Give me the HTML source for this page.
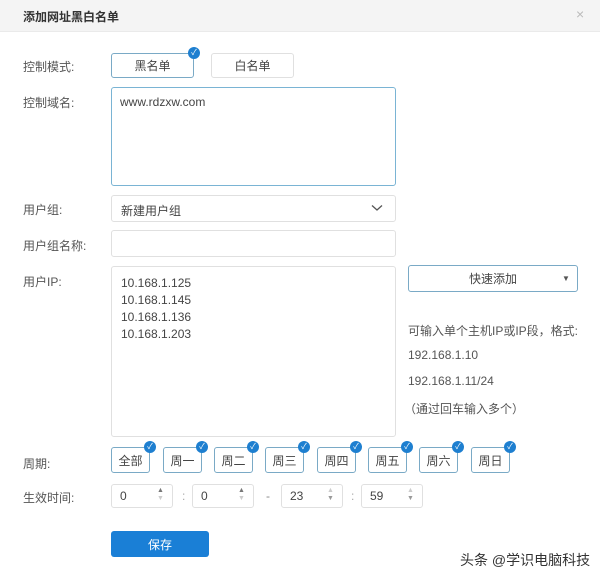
<html><head><style>
body{margin:0;width:600px;height:580px;background:#fff;font-family:"Liberation Sans","Noto Sans CJK SC",sans-serif;font-size:12px;color:#444;position:relative;overflow:hidden}
.a{position:absolute}
.hd{left:0;top:0;width:600px;height:31px;background:#f4f4f4;border-bottom:1px solid #eaeaea}
.lb{left:23px;color:#555}
.bx{border:1px solid #e0e0e0;border-radius:3px;background:#fff;box-sizing:border-box}
.bl{border-color:#7aaac6}
.btn{display:flex;align-items:center;justify-content:center}
.ck{width:12px;height:12px;border-radius:50%;background:#1e7fd0;color:#fff;font-size:8px;line-height:12px;text-align:center}
.tx{color:#555}
</style></head><body>
<div class="a hd"></div>
<div class="a" style="left:23px;top:8px;font-weight:bold;font-size:12px;color:#333">添加网址黑白名单</div>
<div class="a" style="left:576px;top:6px;color:#bbb;font-size:14px">×</div>

<div class="a lb" style="top:58px">控制模式:</div>
<div class="a bx bl btn" style="left:111px;top:53px;width:83px;height:25px">黑名单</div>
<div class="a ck" style="left:188px;top:47px">✓</div>
<div class="a bx btn" style="left:211px;top:53px;width:83px;height:25px">白名单</div>

<div class="a lb" style="top:94px">控制域名:</div>
<div class="a bx bl" style="left:111px;top:87px;width:285px;height:99px;border-color:#7ab4d4"></div>
<div class="a" style="left:120px;top:95px">www.rdzxw.com</div>

<div class="a lb" style="top:201px">用户组:</div>
<div class="a bx" style="left:111px;top:195px;width:285px;height:27px"></div>
<div class="a" style="left:121px;top:202px">新建用户组</div>
<svg class="a" style="left:371px;top:204px" width="12" height="8"><path d="M1 1.5L6 6L11 1.5" stroke="#555" stroke-width="1.3" fill="none"/></svg>

<div class="a lb" style="top:237px">用户组名称:</div>
<div class="a bx" style="left:111px;top:230px;width:285px;height:27px"></div>

<div class="a lb" style="top:273px">用户IP:</div>
<div class="a bx" style="left:111px;top:266px;width:285px;height:171px"></div>
<div class="a" style="left:121px;top:275px;line-height:17px">10.168.1.125<br>10.168.1.145<br>10.168.1.136<br>10.168.1.203</div>

<div class="a bx bl btn" style="left:408px;top:265px;width:170px;height:27px">快速添加</div>
<div class="a" style="left:562px;top:274px;font-size:8px;color:#555">▼</div>
<div class="a tx" style="left:408px;top:322px">可输入单个主机IP或IP段，格式:</div>
<div class="a tx" style="left:408px;top:348px">192.168.1.10</div>
<div class="a tx" style="left:408px;top:374px">192.168.1.11/24</div>
<div class="a tx" style="left:404px;top:400px">（通过回车输入多个）</div>

<div class="a lb" style="top:455px">周期:</div>
<div class="a bx bl btn" style="left:111px;top:447px;width:39px;height:26px">全部</div><div class="a ck" style="left:144px;top:441px">✓</div>
<div class="a bx bl btn" style="left:163px;top:447px;width:39px;height:26px">周一</div><div class="a ck" style="left:196px;top:441px">✓</div>
<div class="a bx bl btn" style="left:214px;top:447px;width:39px;height:26px">周二</div><div class="a ck" style="left:247px;top:441px">✓</div>
<div class="a bx bl btn" style="left:265px;top:447px;width:39px;height:26px">周三</div><div class="a ck" style="left:298px;top:441px">✓</div>
<div class="a bx bl btn" style="left:317px;top:447px;width:39px;height:26px">周四</div><div class="a ck" style="left:350px;top:441px">✓</div>
<div class="a bx bl btn" style="left:368px;top:447px;width:39px;height:26px">周五</div><div class="a ck" style="left:401px;top:441px">✓</div>
<div class="a bx bl btn" style="left:419px;top:447px;width:39px;height:26px">周六</div><div class="a ck" style="left:452px;top:441px">✓</div>
<div class="a bx bl btn" style="left:471px;top:447px;width:39px;height:26px">周日</div><div class="a ck" style="left:504px;top:441px">✓</div>

<div class="a lb" style="top:489px">生效时间:</div>
<div class="a bx" style="left:111px;top:484px;width:62px;height:24px"></div><div class="a" style="left:120px;top:489px">0</div><div class="a" style="left:157px;top:487px;font-size:7px;line-height:8px;color:#777">▲<br><span style="color:#ccc">▼</span></div>
<div class="a" style="left:182px;top:489px;color:#aaa">:</div>
<div class="a bx" style="left:192px;top:484px;width:62px;height:24px"></div><div class="a" style="left:201px;top:489px">0</div><div class="a" style="left:238px;top:487px;font-size:7px;line-height:8px;color:#777">▲<br><span style="color:#ccc">▼</span></div>
<div class="a" style="left:266px;top:489px;color:#888">-</div>
<div class="a bx" style="left:281px;top:484px;width:62px;height:24px"></div><div class="a" style="left:290px;top:489px">23</div><div class="a" style="left:327px;top:487px;font-size:7px;line-height:8px;color:#999"><span style="color:#ccc">▲</span><br>▼</div>
<div class="a" style="left:351px;top:489px;color:#aaa">:</div>
<div class="a bx" style="left:361px;top:484px;width:62px;height:24px"></div><div class="a" style="left:370px;top:489px">59</div><div class="a" style="left:407px;top:487px;font-size:7px;line-height:8px;color:#999"><span style="color:#ccc">▲</span><br>▼</div>

<div class="a btn" style="left:111px;top:531px;width:98px;height:26px;background:#1a7fd6;border-radius:3px;color:#fff">保存</div>
<div class="a" style="left:460px;top:550px;font-size:14px;color:#333;text-shadow:0 0 2px #fff">头条 @学识电脑科技</div>
</body></html>
